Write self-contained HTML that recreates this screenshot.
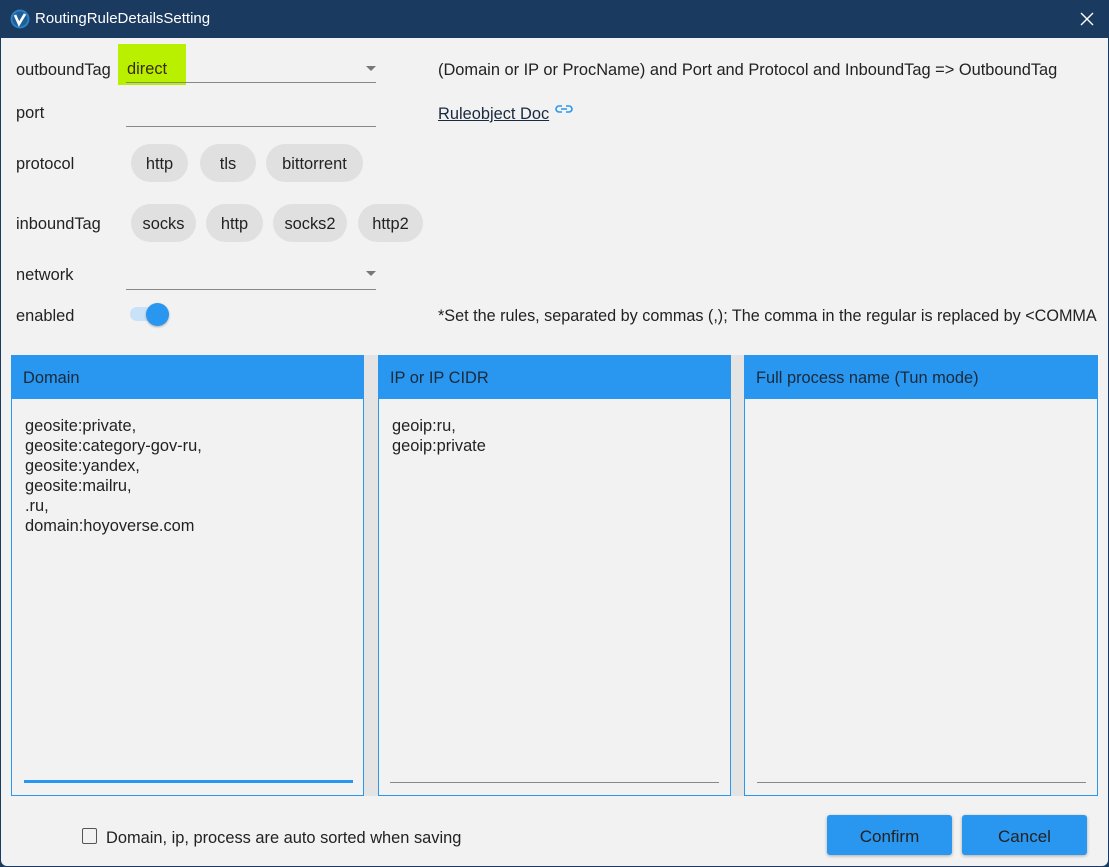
<!DOCTYPE html>
<html><head><style>
*{margin:0;padding:0;box-sizing:border-box}
body{width:1109px;height:867px;background:#1b3a5f;font-family:"Liberation Sans",sans-serif;font-size:16.4px;color:#222;position:relative;overflow:hidden}
.win{position:absolute;left:1px;top:38px;width:1107px;height:828px;background:#f2f2f2;border-radius:0 0 6px 6px;overflow:hidden}
.t{position:absolute;white-space:nowrap}
.line{position:absolute;height:1px;background:#888}
.chip{position:absolute;height:38px;border-radius:19px;background:#e0e0e0;line-height:40px;text-align:center}
.panel{position:absolute;top:355px;height:441px;border:1px solid #2996f0;background:#f2f2f2}
.ph{height:43px;background:#2996f0;line-height:45px;padding-left:11px;color:#1a2a3a}
.pc{padding:17px 0 0 13px;line-height:20px}
.btn{position:absolute;top:815px;height:40px;background:#2996f0;border-radius:3px;text-align:center;line-height:44px;font-size:17px;box-shadow:0 1px 3px rgba(0,0,0,.3)}
</style></head><body>
<svg style="position:absolute;left:10px;top:9px" width="20" height="20" viewBox="0 0 20 20"><circle cx="10" cy="10" r="9.5" fill="#2d7fc4"/><circle cx="10" cy="10" r="7.5" fill="#1f5f98"/><path d="M5 6 L9 15 L15 5" stroke="#fff" stroke-width="2.6" fill="none"/></svg>
<div class="t" style="left:35px;top:10px;color:#fff;font-size:15px">RoutingRuleDetailsSetting</div>
<svg style="position:absolute;left:1080px;top:12px" width="14" height="14"><path d="M1 1L13 13M13 1L1 13" stroke="#fff" stroke-width="1.4"/></svg>
<div class="win"><div class="t" style="left:437px;top:269px;font-size:16.2px">*Set the rules, separated by commas (,); The comma in the regular is replaced by &lt;COMMA</div></div>
<div class="t" style="left:16px;top:61px">outboundTag</div>
<div style="position:absolute;left:118px;top:44px;width:68px;height:41px;background:#b8f000"></div>
<div class="t" style="left:127px;top:60px;color:#3a2a10">direct</div>
<div style="position:absolute;left:366px;top:66px;border-left:5px solid transparent;border-right:5px solid transparent;border-top:5px solid #777"></div>
<div class="line" style="left:126px;top:82px;width:250px"></div>
<div class="t" style="left:438px;top:61px">(Domain or IP or ProcName) and Port and Protocol and InboundTag =&gt; OutboundTag</div>
<div class="t" style="left:16px;top:104px">port</div>
<div class="line" style="left:126px;top:126px;width:250px"></div>
<div class="t" style="left:438px;top:105px;text-decoration:underline;color:#1a2a40">Ruleobject Doc</div>
<svg style="position:absolute;left:555px;top:104px" width="18" height="10" viewBox="0 0 18 10"><path d="M7 2H4a3 3 0 0 0 0 6h3M11 2h3a3 3 0 0 1 0 6h-3M6 5h6" stroke="#2996f0" stroke-width="1.6" fill="none"/></svg>
<div class="t" style="left:16px;top:155px">protocol</div>
<div class="chip" style="left:131px;top:144px;width:57px">http</div>
<div class="chip" style="left:200px;top:144px;width:56px">tls</div>
<div class="chip" style="left:266px;top:144px;width:97px">bittorrent</div>
<div class="t" style="left:16px;top:215px">inboundTag</div>
<div class="chip" style="left:131px;top:204px;width:65px">socks</div>
<div class="chip" style="left:206px;top:204px;width:57px">http</div>
<div class="chip" style="left:273px;top:204px;width:74px">socks2</div>
<div class="chip" style="left:358px;top:204px;width:65px">http2</div>
<div class="t" style="left:16px;top:266px">network</div>
<div style="position:absolute;left:366px;top:271px;border-left:5px solid transparent;border-right:5px solid transparent;border-top:5px solid #777"></div>
<div class="line" style="left:126px;top:289px;width:250px"></div>
<div class="t" style="left:16px;top:307px">enabled</div>
<div style="position:absolute;left:130px;top:307px;width:36px;height:14px;border-radius:7px;background:#c8e2f8"></div>
<div style="position:absolute;left:146px;top:303px;width:23px;height:23px;border-radius:50%;background:#2996f0;box-shadow:0 1px 2px rgba(0,0,0,.3)"></div>
<div style="position:absolute;left:364px;top:355px;width:14px;height:441px;background:#e4e4e4"></div>
<div style="position:absolute;left:731px;top:355px;width:13px;height:441px;background:#e4e4e4"></div>
<div class="panel" style="left:11px;width:353px"><div class="ph">Domain</div><div class="pc">geosite:private,<br>geosite:category-gov-ru,<br>geosite:yandex,<br>geosite:mailru,<br>.ru,<br>domain:hoyoverse.com</div>
<div style="position:absolute;left:12px;top:424px;width:329px;height:3px;background:#2996f0"></div></div>
<div class="panel" style="left:378px;width:353px"><div class="ph">IP or IP CIDR</div><div class="pc">geoip:ru,<br>geoip:private</div>
<div style="position:absolute;left:11px;top:426px;width:329px;height:1px;background:#888"></div></div>
<div class="panel" style="left:744px;width:354px"><div class="ph">Full process name (Tun mode)</div>
<div style="position:absolute;left:12px;top:426px;width:329px;height:1px;background:#888"></div></div>
<div style="position:absolute;left:82px;top:828px;width:15px;height:16px;border:1.5px solid #555;border-radius:2px"></div>
<div class="t" style="left:106px;top:829px">Domain, ip, process are auto sorted when saving</div>
<div class="btn" style="left:827px;width:125px">Confirm</div>
<div class="btn" style="left:962px;width:125px">Cancel</div>
</body></html>
